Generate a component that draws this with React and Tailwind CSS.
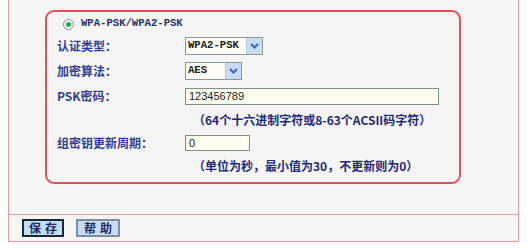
import React from "react";

const cn = '"Noto Sans CJK SC", "Liberation Sans", sans-serif';
const mono = '"Liberation Mono", "Noto Sans CJK SC", monospace';

function Chevron() {
  return (
    <svg width="9" height="6" viewBox="0 0 9 6">
      <path d="M1 1 L4.5 4.5 L8 1" fill="none" stroke="#3a66c4" strokeWidth="2" />
    </svg>
  );
}

function Select({ value, w }) {
  return (
    <div
      className="flex h-[18px] items-stretch border border-[#8a9c94] bg-[#fdfdf6]"
      style={{ width: w }}
    >
      <div
        className="flex flex-1 items-center pl-[2px] text-[10.6px] font-bold text-[#222]"
        style={{ fontFamily: mono }}
      >
        {value}
      </div>
      <div className="flex w-[16px] items-center justify-center border-l border-[#b8c8e0] bg-[#c9dbf5]">
        <Chevron />
      </div>
    </div>
  );
}

function Label({ children }) {
  return (
    <div
      className="w-[138px] pl-[10px] text-[12px] font-bold text-[#33408f]"
      style={{ fontFamily: cn }}
    >
      {children}
    </div>
  );
}

export default function App() {
  return (
    <div className="h-[248px] w-[528px] overflow-hidden bg-white">
      <div className="ml-[8px] w-[511px] border-x border-b border-[#e59a9c] bg-[#f5f5f5]">
        <div className="h-[214px] pt-[10px]">
          <div className="ml-[36px] box-border h-[174px] w-[416px] rounded-[9px] border-2 border-[#e0525e] pt-[2px]">
            <div className="flex h-[20px] items-center pl-[16px]">
              <div className="flex h-[11px] w-[11px] items-center justify-center rounded-full border border-[#7c8c98] bg-white">
                <div className="h-[5px] w-[5px] rounded-full bg-[#2aa84a]" />
              </div>
              <span
                className="ml-[7px] text-[10.6px] font-bold text-[#2c3568]"
                style={{ fontFamily: mono }}
              >
                WPA-PSK/WPA2-PSK
              </span>
            </div>
            <div className="flex h-[24px] items-center">
              <Label>认证类型：</Label>
              <Select value="WPA2-PSK" w={78} />
            </div>
            <div className="flex h-[25px] items-center">
              <Label>加密算法：</Label>
              <Select value="AES" w={57} />
            </div>
            <div className="flex h-[26px] items-center">
              <Label>PSK密码：</Label>
              <div
                className="flex h-[17px] w-[254px] items-center border border-[#7e9484] bg-[#fffdf0] pl-[3px] text-[11px] text-[#222]"
                style={{ fontFamily: '"Liberation Sans", sans-serif' }}
              >
                123456789
              </div>
            </div>
            <div className="flex h-[22px] items-center pl-[146px]">
              <span
                className="text-[12px] font-bold text-[#1f2a7a]"
                style={{ fontFamily: cn }}
              >
                （64个十六进制字符或8-63个ACSII码字符）
              </span>
            </div>
            <div className="flex h-[24px] items-center">
              <Label>组密钥更新周期：</Label>
              <div
                className="flex h-[16px] w-[65px] items-center border border-[#7e9484] bg-[#fffdf0] pl-[3px] text-[11px] text-[#222]"
                style={{ fontFamily: '"Liberation Sans", sans-serif' }}
              >
                0
              </div>
            </div>
            <div className="flex h-[22px] items-center pl-[146px]">
              <span
                className="text-[12px] font-bold text-[#1f2a7a]"
                style={{ fontFamily: cn }}
              >
                （单位为秒，最小值为30，不更新则为0）
              </span>
            </div>
          </div>
        </div>
        <div className="flex h-[27px] items-center gap-[12px] border-t border-[#e59a9c] pl-[13px]">
          <div
            className="flex h-[18px] w-[42px] items-center justify-center border-2 border-[#1c2a36] bg-[#c6dcf2] text-[12px] font-bold tracking-[4px] text-[#1e2a60]"
            style={{ fontFamily: cn }}
          >
            <span className="pl-[4px]">保存</span>
          </div>
          <div
            className="flex h-[18px] w-[44px] items-center justify-center border-2 border-[#7f8f9f] bg-[#c6dcf2] text-[12px] font-bold tracking-[4px] text-[#1e2a60]"
            style={{ fontFamily: cn }}
          >
            <span className="pl-[4px]">帮助</span>
          </div>
        </div>
      </div>
    </div>
  );
}
